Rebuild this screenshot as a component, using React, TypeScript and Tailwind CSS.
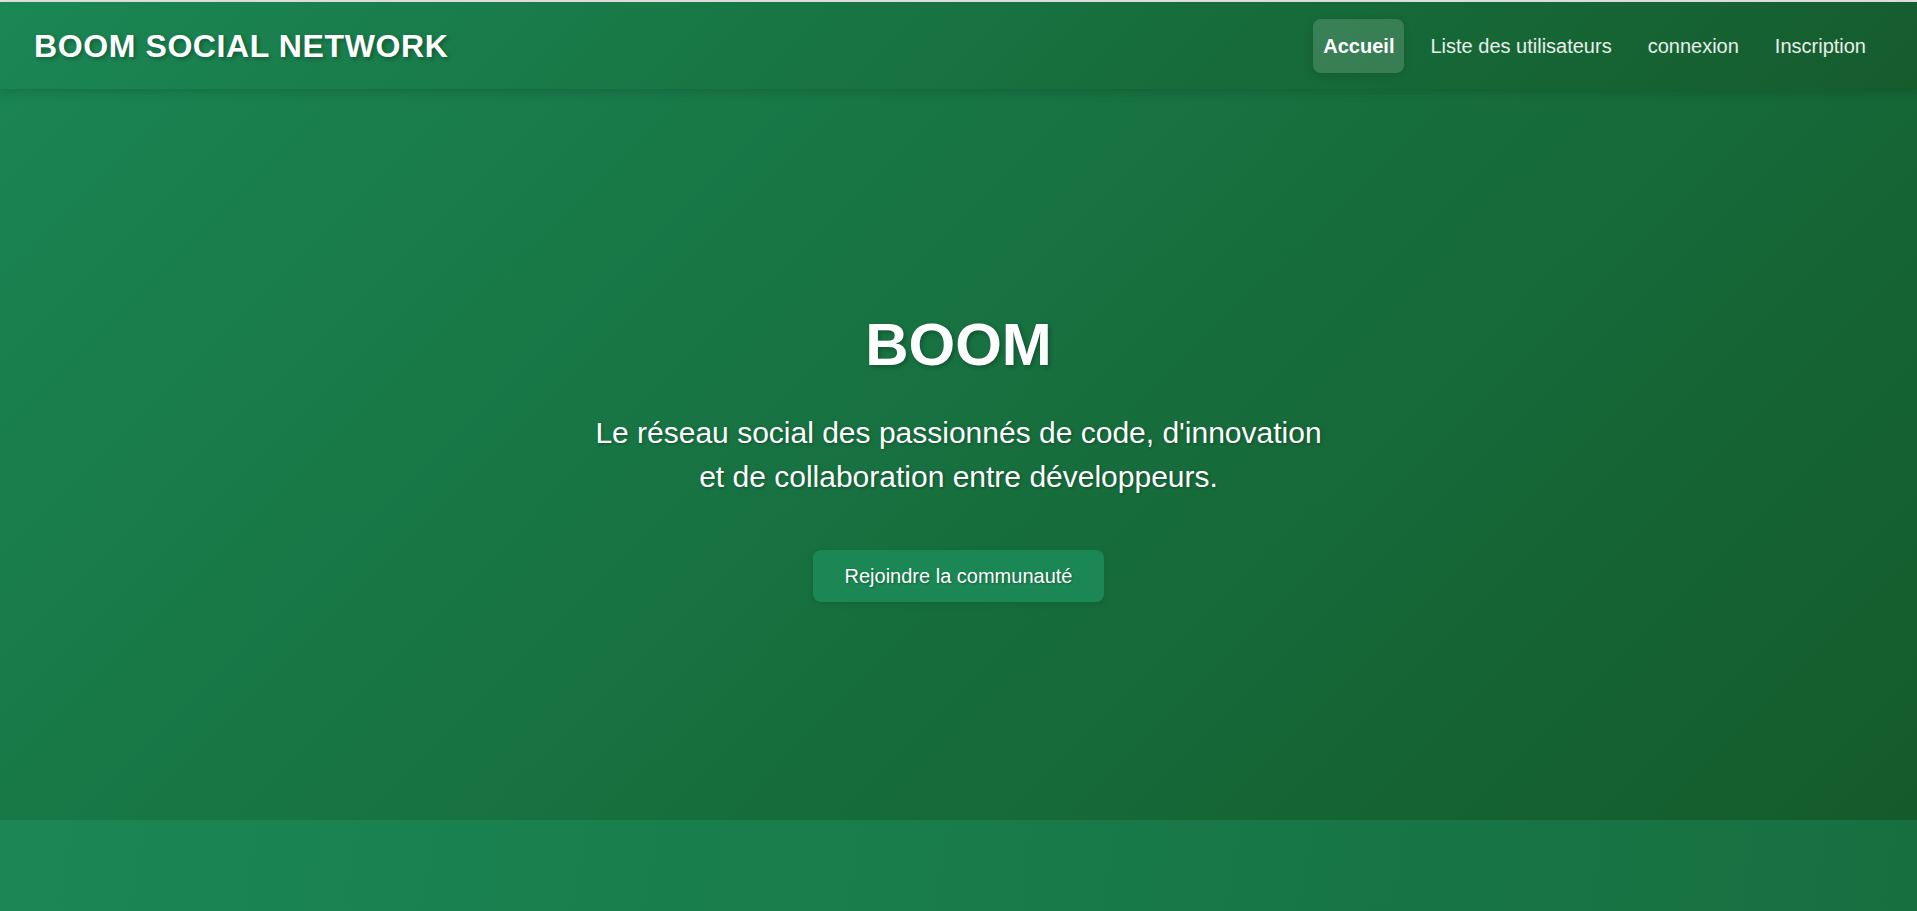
export default function App() {
  const links = ['Liste des utilisateurs', 'connexion', 'Inscription'];

  return (
    <div className="flex h-screen flex-col overflow-hidden font-['Liberation_Sans',Arial,sans-serif] text-white">
      <div className="h-[2px] bg-[#e4e4e4]" />

      {/* Navbar */}
      <header className="relative z-10 flex h-[87px] items-center justify-between bg-[linear-gradient(135deg,#1a8754_0%,#155c2d_100%)] pl-[34px] pr-[41px] shadow-[0_3px_10px_rgba(0,0,0,0.15)]">
        <h1 className="text-[32px] font-bold tracking-[0.6px] [text-shadow:2px_2px_4px_rgba(0,0,0,0.3)]">
          BOOM SOCIAL NETWORK
        </h1>
        <nav className="flex items-center gap-[16px] text-[20px]">
          <a className="flex h-[54px] items-center rounded-lg bg-white/15 px-[10px] font-bold shadow-[0_2px_8px_rgba(0,0,0,0.12)]">
            Accueil
          </a>
          {links.map((label) => (
            <a key={label} className="flex h-[54px] items-center px-[10px] text-white/90">
              {label}
            </a>
          ))}
        </nav>
      </header>

      {/* Hero */}
      <section className="flex h-[731px] shrink-0 flex-col items-center bg-[linear-gradient(135deg,#1a8452_0%,#145b2b_100%)] pt-[226px] text-center">
        <h2 className="text-[60px] font-bold leading-none [text-shadow:2px_2px_4px_rgba(0,0,0,0.25)]">BOOM</h2>
        <p className="mt-[36px] max-w-[740px] text-[30px] leading-[44px] [text-shadow:1px_1px_3px_rgba(0,0,0,0.3)]">
          Le réseau social des passionnés de code, d'innovation et de collaboration entre développeurs.
        </p>
        <button className="mt-[51px] flex h-[52px] items-center rounded-lg bg-[#1a8754] px-[32px] text-[20px] text-white shadow-[0_2px_6px_rgba(0,0,0,0.1)] [text-shadow:1px_1px_2px_rgba(0,0,0,0.3)]">
          Rejoindre la communauté
        </button>
      </section>

      <section className="flex-1 bg-[linear-gradient(100deg,#1a8754_0%,#176f40_100%)]" />
    </div>
  );
}
